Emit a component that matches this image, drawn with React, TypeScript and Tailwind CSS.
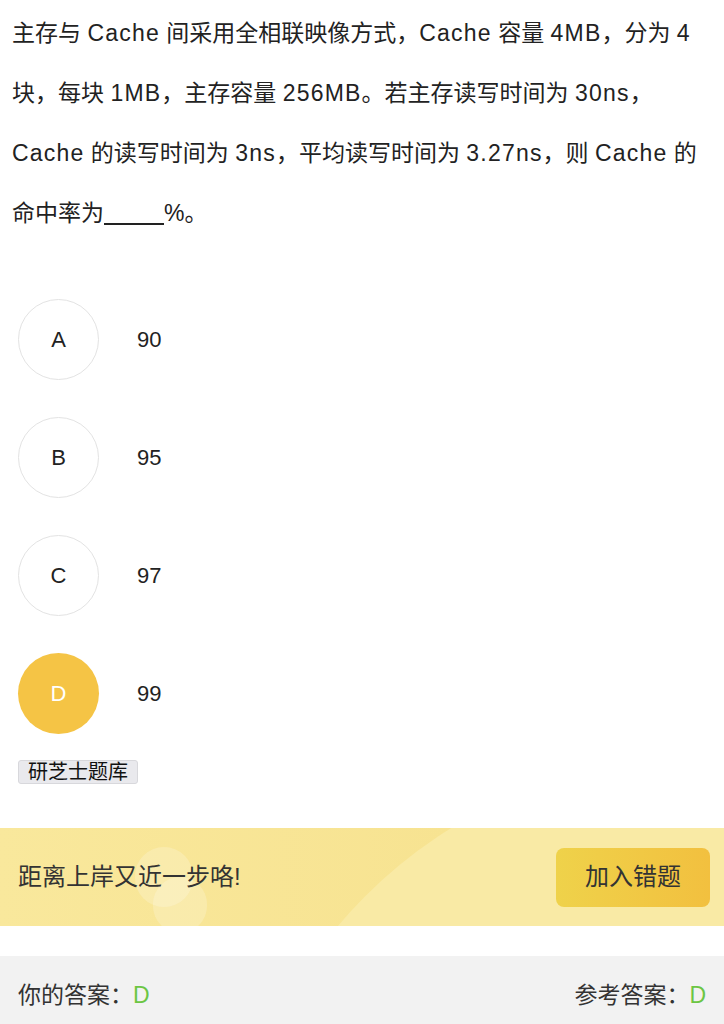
import React from "react";

const options = [
  { key: "A", text: "90" },
  { key: "B", text: "95" },
  { key: "C", text: "97" },
  { key: "D", text: "99" },
];

// latin runs in the stem are a bit wider in the original
function L({ children }: { children: React.ReactNode }) {
  return <span className="tracking-[1.2px]">{children}</span>;
}

export default function App() {
  const picked = "D";

  return (
    <div
      className="w-[724px] h-[1024px] overflow-hidden bg-white text-[#333]"
      style={{ fontFamily: '"Liberation Sans", "Noto Sans CJK SC", sans-serif' }}
    >
      {/* question */}
      <div className="px-3 pt-[3px] text-[23px] leading-[60px] text-[#222] whitespace-nowrap">
        <div>
          主存与 <L>Cache</L> 间采用全相联映像方式，<L>Cache</L> 容量 <L>4MB</L>，分为 <L>4</L>
        </div>
        <div>
          块，每块 <L>1MB</L>，主存容量 <L>256MB</L>。若主存读写时间为 <L>30ns</L>，
        </div>
        <div>
          <L>Cache</L> 的读写时间为 <L>3ns</L>，平均读写时间为 <L>3.27ns</L>，则 <L>Cache</L> 的
        </div>
        <div>
          命中率为
          <span className="inline-block w-[60px] h-[22px] border-b-2 border-[#222] align-[-4px]" />
          %。
        </div>
      </div>

      {/* options */}
      <div className="flex flex-col gap-[37px] pl-[18px] mt-[56px]">
        {options.map((o) => (
          <div key={o.key} className="flex items-center">
            <div
              className={
                o.key === picked
                  ? "w-[81px] h-[81px] rounded-full bg-[#f5c445] text-white flex items-center justify-center text-[22px]"
                  : "w-[81px] h-[81px] rounded-full border border-[#e3e3e3] text-[#222] flex items-center justify-center text-[22px]"
              }
            >
              {o.key}
            </div>
            <span className="ml-[38px] text-[22px] text-[#222]">{o.text}</span>
          </div>
        ))}
      </div>

      <div className="pl-[18px] mt-[26px]">
        <span className="inline-block px-[9px] h-[24px] leading-[23px] bg-[#e9e9ed] border border-[#d8d8dc] rounded-[3px] text-[20px] text-[#111]">
          研芝士题库
        </span>
      </div>

      {/* banner */}
      <div className="relative mt-[42px] h-[98px] bg-gradient-to-r from-[#f9e89c] to-[#f6e08a] overflow-hidden flex items-center justify-between pl-[18px] pr-[14px]">
        <div className="absolute left-[228px] top-[-70px] w-[940px] h-[940px] rounded-full bg-[#f9eaa5]" />
        <div className="absolute left-[135px] top-[19px] w-[58px] h-[60px] rounded-full bg-white/20" />
        <div className="absolute left-[153px] top-[49px] w-[54px] h-[56px] rounded-full bg-white/20" />
        <span className="relative text-[24px] text-[#333]">距离上岸又近一步咯!</span>
        <button className="relative w-[154px] h-[59px] rounded-[8px] bg-gradient-to-r from-[#efd24a] to-[#f2c03f] text-[24px] text-[#333]">
          加入错题
        </button>
      </div>

      {/* answers */}
      <div className="mt-[30px] h-[78px] bg-[#f2f2f2] flex items-center justify-between px-[18px] text-[23px] text-[#333]">
        <span>
          你的答案：<span className="text-[#6cc644]">D</span>
        </span>
        <span>
          参考答案：<span className="text-[#6cc644]">D</span>
        </span>
      </div>
    </div>
  );
}
